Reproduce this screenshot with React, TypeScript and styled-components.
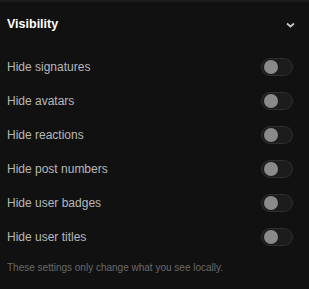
import React, { useState } from "react";
import styled, { createGlobalStyle } from "styled-components";

const Global = createGlobalStyle`
  html, body { margin: 0; padding: 0; background: #111111; }
  body { font-family: "Liberation Sans", Arial, sans-serif; }
`;

const Panel = styled.section`
  width: 309px;
  height: 289px;
  box-sizing: border-box;
  background: #111111;
  border-top: 2px solid #1c1c1c;
  display: flex;
  flex-direction: column;
`;

const Header = styled.div`
  display: flex;
  align-items: center;
  justify-content: space-between;
  height: 44px;
  padding: 0 14px 0 7px;
`;

const Title = styled.h3`
  margin: 0;
  font-size: 12.5px;
  font-weight: 700;
  color: #ffffff;
`;

const Chevron = styled.svg`
  width: 9px;
  height: 6px;
  display: block;
  margin-top: 1px;
`;

const List = styled.div`
  display: flex;
  flex-direction: column;
  padding: 4px 16px 0 7px;
`;

const Row = styled.label`
  display: flex;
  align-items: center;
  justify-content: space-between;
  height: 34px;
`;

const Label = styled.span`
  font-size: 12px;
  color: #b8b8b8;
`;

const Track = styled.button<{ $on: boolean }>`
  width: 32px;
  height: 18px;
  box-sizing: border-box;
  border-radius: 9px;
  border: 1px solid #2e2e2e;
  background: ${(p) => (p.$on ? "#3a6fd8" : "#1c1c1c")};
  padding: 0 2px;
  display: flex;
  align-items: center;
  justify-content: ${(p) => (p.$on ? "flex-end" : "flex-start")};
  cursor: pointer;
`;

const Knob = styled.span`
  width: 14px;
  height: 14px;
  border-radius: 50%;
  background: #8a8a8a;
`;

const Note = styled.p`
  margin: 8px 0 0 7px;
  font-size: 10px;
  color: #6a6a6a;
`;

const items = [
  "Hide signatures",
  "Hide avatars",
  "Hide reactions",
  "Hide post numbers",
  "Hide user badges",
  "Hide user titles",
];

export default function App() {
  const [state, setState] = useState<boolean[]>(items.map(() => false));
  return (
    <>
      <Global />
      <Panel>
        <Header>
          <Title>Visibility</Title>
          <Chevron viewBox="0 0 9 6">
            <path d="M1 1.5 L4.5 4.5 L8 1.5" fill="none" stroke="#c8c8c8" strokeWidth="1.8" />
          </Chevron>
        </Header>
        <List>
          {items.map((t, i) => (
            <Row key={t}>
              <Label>{t}</Label>
              <Track
                $on={state[i]}
                onClick={() => setState((s) => s.map((v, j) => (j === i ? !v : v)))}
              >
                <Knob />
              </Track>
            </Row>
          ))}
        </List>
        <Note>These settings only change what you see locally.</Note>
      </Panel>
    </>
  );
}
